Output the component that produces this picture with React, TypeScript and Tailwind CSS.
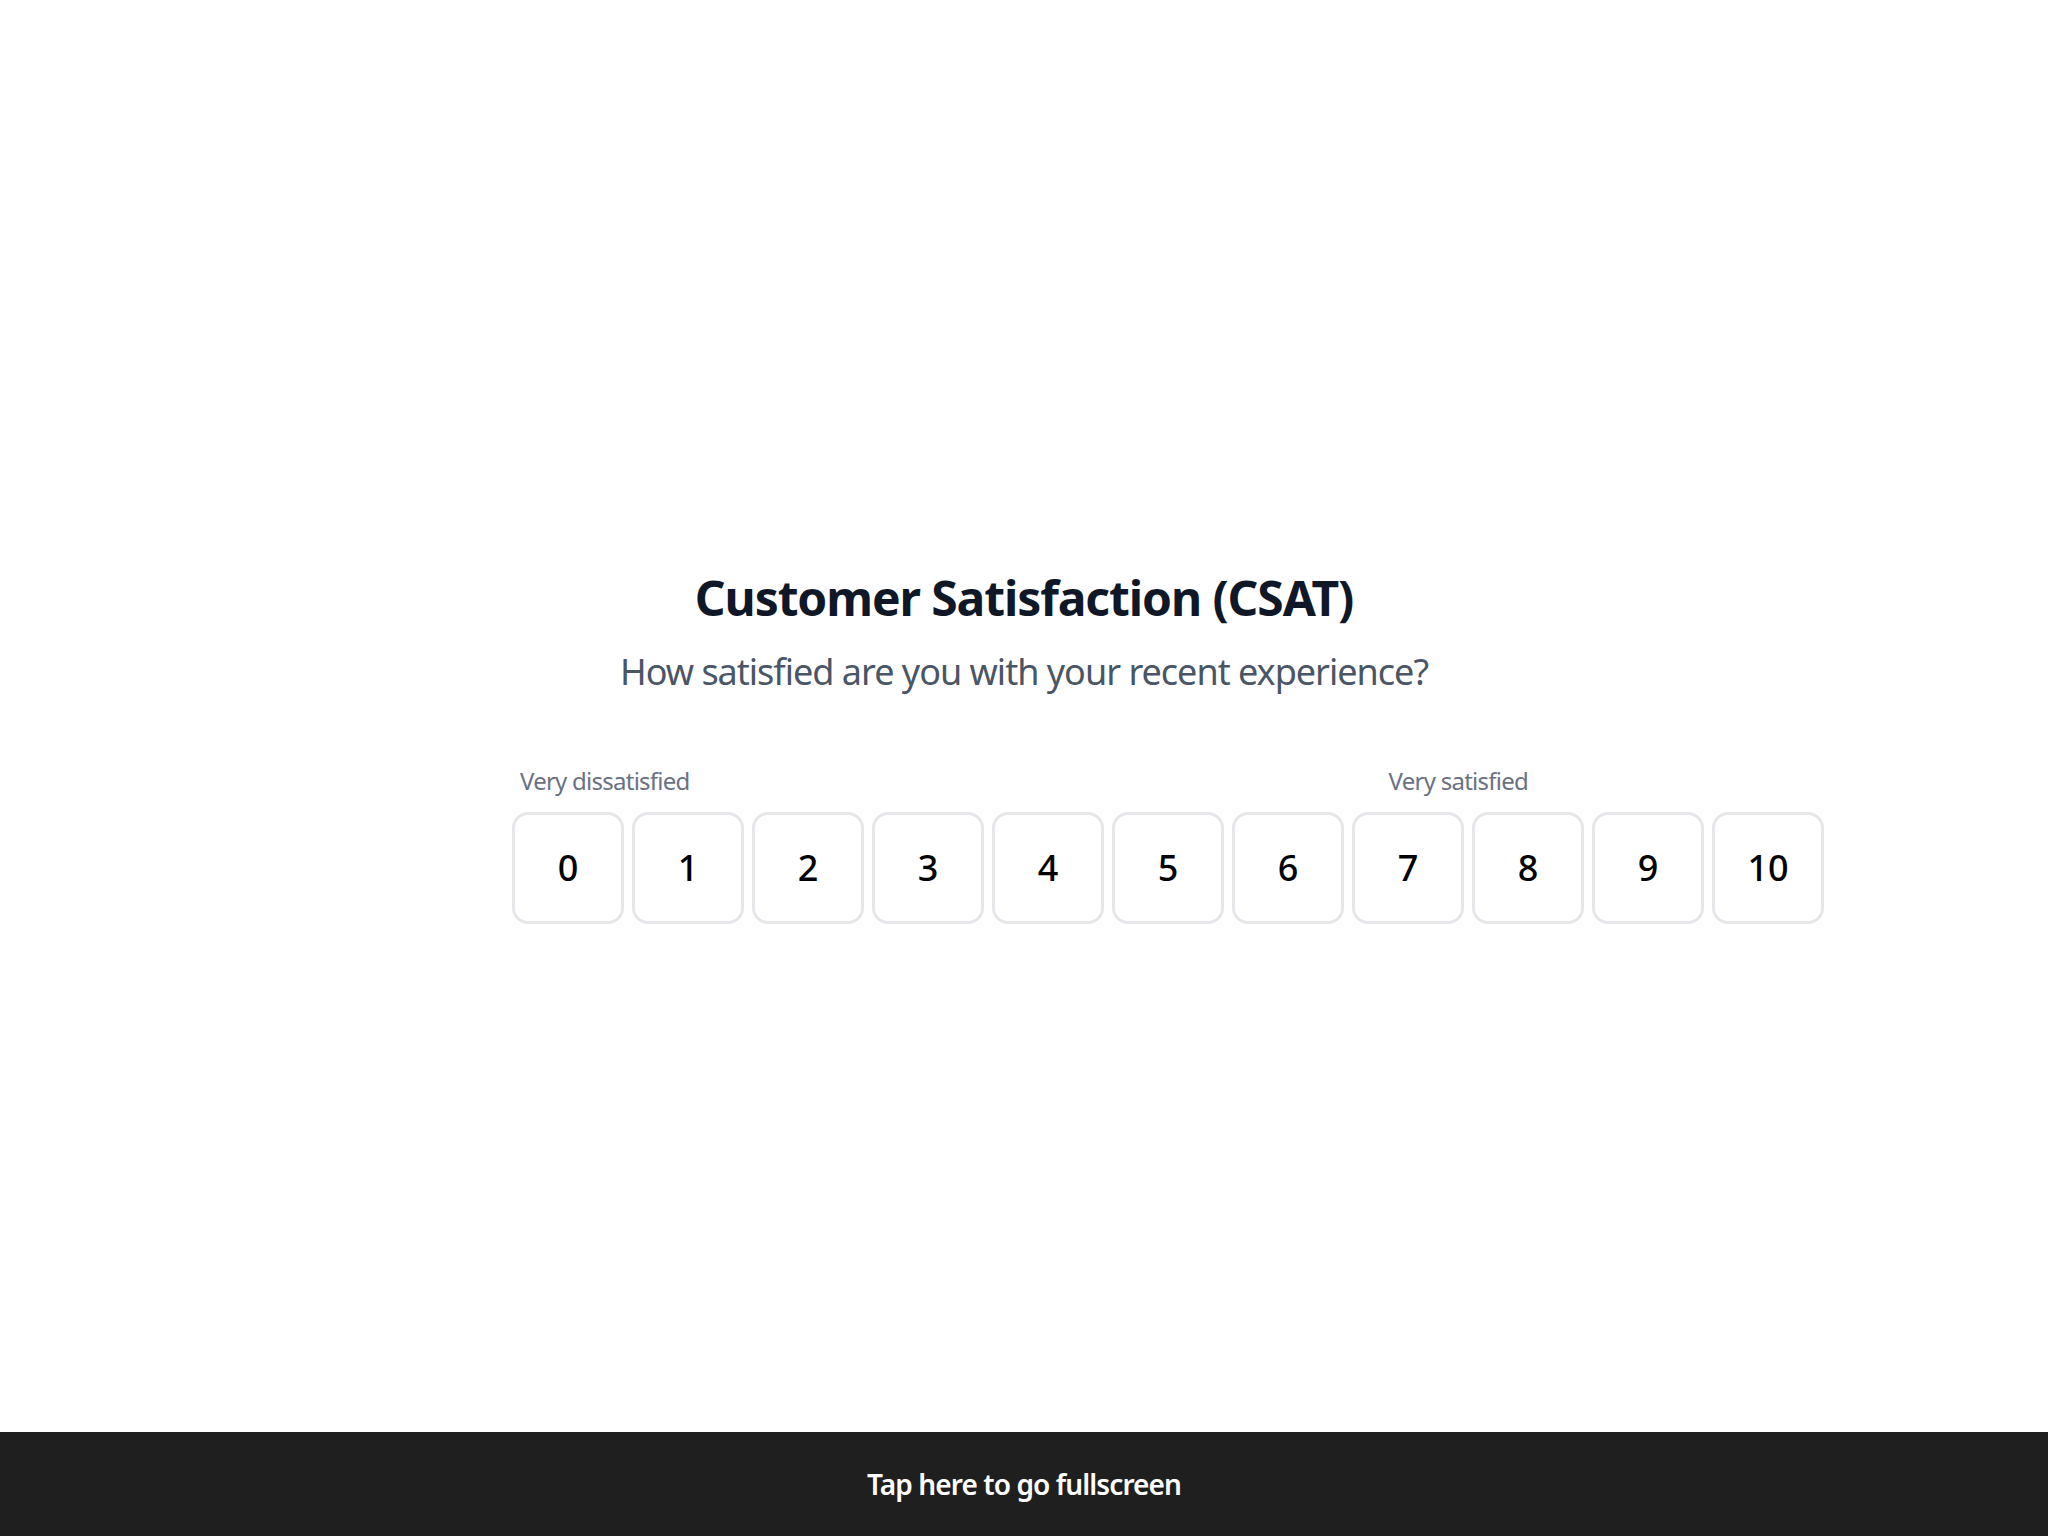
import { useState } from 'react'

const scores = [0, 1, 2, 3, 4, 5, 6, 7, 8, 9, 10]

export default function App() {
  const [selected, setSelected] = useState<number | null>(null)

  return (
    <div
      className="min-h-screen bg-white"
      style={{ fontFamily: '"Noto Sans", "Open Sans", sans-serif' }}
    >
      <div className="mx-auto w-[1024px] pt-[574px]">
        <h1 className="text-center text-5xl leading-none font-bold tracking-[-1.1px] text-gray-900">
          Customer Satisfaction (CSAT)
        </h1>
        <p className="mt-[30px] text-center text-4xl tracking-[-1px] text-gray-600">
          How satisfied are you with your recent experience?
        </p>

        <div className="mt-[73px] flex justify-between px-2 text-2xl tracking-[-0.75px] text-gray-500">
          <span>Very dissatisfied</span>
          <span>Very satisfied</span>
        </div>

        {/* Score buttons overflow the container on purpose, like the original */}
        <div className="mt-[15px] flex gap-2">
          {scores.map((n) => (
            <button
              key={n}
              onClick={() => setSelected(n)}
              className={`flex h-28 w-28 shrink-0 items-center justify-center rounded-2xl border-[3px] bg-white text-4xl font-medium text-black ${
                selected === n ? 'border-gray-900' : 'border-[#e5e7eb]'
              }`}
            >
              {n}
            </button>
          ))}
        </div>
      </div>

      <div className="fixed inset-x-0 bottom-0 flex h-[104px] items-center justify-center bg-[#1f1f1f] text-[28px] font-semibold tracking-[-0.9px] text-white">
        Tap here to go fullscreen
      </div>
    </div>
  )
}
